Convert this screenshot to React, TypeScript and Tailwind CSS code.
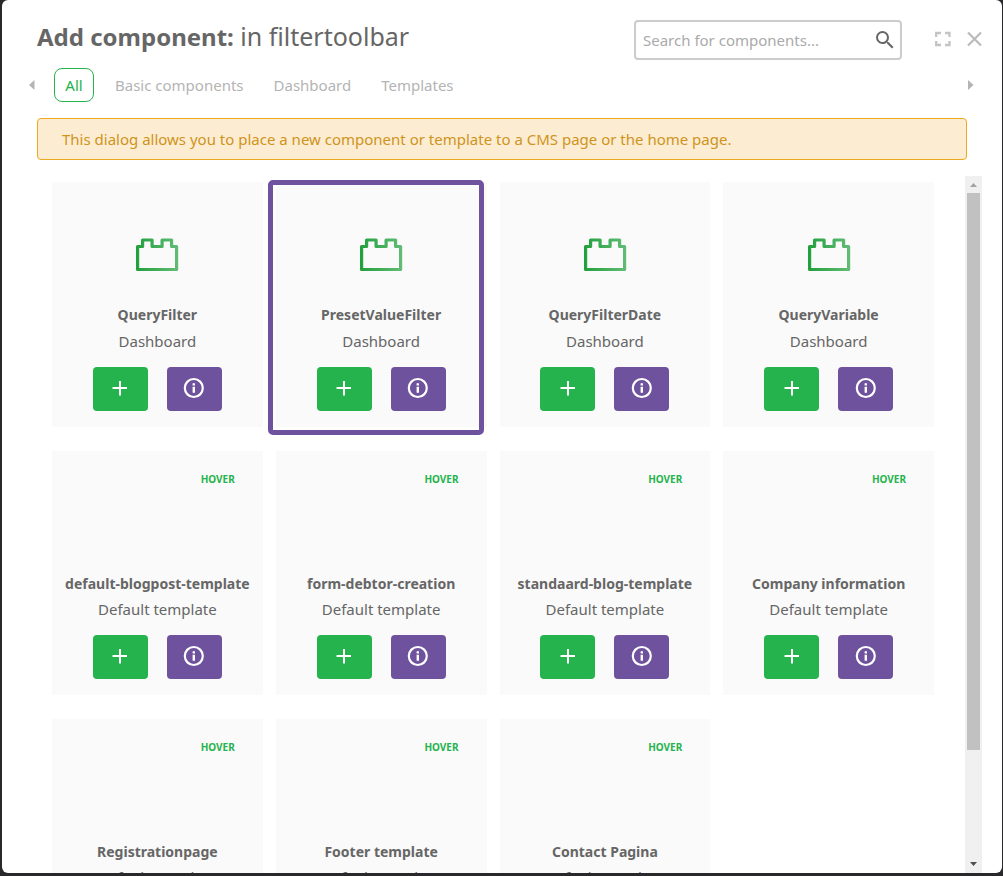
import React from "react";

type Item = { name: string; kind: string; template?: boolean; selected?: boolean };

const items: Item[] = [
  { name: "QueryFilter", kind: "Dashboard" },
  { name: "PresetValueFilter", kind: "Dashboard", selected: true },
  { name: "QueryFilterDate", kind: "Dashboard" },
  { name: "QueryVariable", kind: "Dashboard" },
  { name: "default-blogpost-template", kind: "Default template", template: true },
  { name: "form-debtor-creation", kind: "Default template", template: true },
  { name: "standaard-blog-template", kind: "Default template", template: true },
  { name: "Company information", kind: "Default template", template: true },
  { name: "Registrationpage", kind: "Default template", template: true },
  { name: "Footer template", kind: "Default template", template: true },
  { name: "Contact Pagina", kind: "Default template", template: true },
];

const tabs = ["All", "Basic components", "Dashboard", "Templates"];

function BrickIcon() {
  return (
    <svg width="44" height="34" viewBox="0 0 44 34" fill="none" aria-hidden="true">
      <defs>
        <linearGradient id="brick" x1="0" y1="0" x2="44" y2="0" gradientUnits="userSpaceOnUse">
          <stop offset="0" stopColor="#1f9f3a" />
          <stop offset="1" stopColor="#63bd77" />
        </linearGradient>
      </defs>
      <path
        d="M2.600 31.500V8.500H7.600V2H17.100V8.500H27.100V2H36.600V8.500H41.600V31.500Z"
        stroke="url(#brick)"
        strokeWidth="3.2"
        strokeLinejoin="round"
      />
    </svg>
  );
}

function PlusIcon() {
  return (
    <svg width="24" height="24" viewBox="0 0 24 24" fill="#fff" aria-hidden="true">
      <path d="M11 4h2v6h6v2h-6v6.500h-2V12H4.500v-2H11z" />
    </svg>
  );
}

function InfoIcon() {
  return (
    <svg width="24" height="24" viewBox="0 0 24 24" fill="none" aria-hidden="true">
      <circle cx="11.800" cy="11" r="9" stroke="#fff" strokeWidth="2.200" />
      <path d="M10.600 6.300h2.400v2.200h-2.400zM10.600 9.800h2.400v6h-2.400z" fill="#fff" />
    </svg>
  );
}

function Card({ item }: { item: Item }) {
  return (
    <li className={`relative flex flex-col items-center bg-[#fafafa] ${item.template ? "h-[244px]" : "h-[245px]"}`}>
      <div className="flex h-[121px] w-full shrink-0 items-end justify-center">
        {item.template ? (
          <span className="mb-[83px] ml-auto mr-7 text-[10px] font-bold leading-5 text-[#25b34d]">HOVER</span>
        ) : (
          <span className="mb-[31px]">
            <BrickIcon />
          </span>
        )}
      </div>
      <h2 className="whitespace-nowrap text-[14px] font-bold leading-6">{item.name}</h2>
      <p className={`text-[15px] leading-6 ${item.template ? "mt-px" : "mt-0.5"}`}>{item.kind}</p>
      <div className="mt-[14px] flex gap-[19px]">
        <button
          type="button"
          aria-label={`Add ${item.name}`}
          className="flex h-11 w-[55px] items-center justify-center rounded bg-[#25b34d]"
        >
          <PlusIcon />
        </button>
        <button
          type="button"
          aria-label={`About ${item.name}`}
          className="flex h-11 w-[55px] items-center justify-center rounded bg-[#6e529d]"
        >
          <InfoIcon />
        </button>
      </div>
      {item.selected && (
        <span className="pointer-events-none absolute -bottom-2 -left-2 -top-0.5 right-[3px] rounded-[5px] border-[5px] border-[#6e529d]" />
      )}
    </li>
  );
}

export default function App() {
  return (
    <div className="h-screen bg-[#29282a] pb-[3px] pl-0.5 pr-px font-['Noto_Sans',sans-serif] text-[#666]">
      <main className="flex h-full flex-col overflow-hidden rounded-md bg-white">
        <header className="flex h-[60px] shrink-0 items-end pl-[35px] pr-[15px]">
          <h1 className="mr-auto whitespace-nowrap text-[25px] leading-[46px]">
            <strong className="text-[24px] font-bold">Add component:</strong> in filtertoolbar
          </h1>
          <label className="flex h-10 w-[268px] items-center rounded border-2 border-[#ccc] pl-[7px] pr-[3px]">
            <input
              type="text"
              aria-label="Search for components"
              placeholder="Search for components..."
              className="min-w-0 flex-1 bg-transparent text-[15px] outline-none placeholder:text-[#aaa]"
            />
            <svg width="24" height="24" viewBox="0 0 24 24" fill="#666" aria-hidden="true">
              <path d="M15.500 14h-.79l-.28-.27A6.471 6.471 0 0 0 16 9.500 6.500 6.500 0 1 0 9.500 16c1.610 0 3.090-.59 4.230-1.570l.27.28v.79l5 4.990L20.490 19l-4.990-5zm-6 0C7.010 14 5 11.990 5 9.500S7.010 5 9.500 5 14 7.010 14 9.500 11.990 14 9.500 14z" />
            </svg>
          </label>
          <button type="button" aria-label="Full screen" className="mb-[9px] ml-[29px]">
            <svg width="24" height="24" viewBox="0 0 24 24" fill="none" stroke="#c4c4c4" strokeWidth="2.300" aria-hidden="true">
              <path d="M5.200 10V6H10M14 6h4.500v4M18.500 14v4H14M10 18H5.200v-4" />
            </svg>
          </button>
          <button type="button" aria-label="Close" className="mb-[9px] ml-2">
            <svg width="24" height="24" viewBox="0 0 24 24" fill="none" stroke="#bbb" strokeWidth="2.200" aria-hidden="true">
              <path d="M5 5.500l13 13M18 5.500l-13 13" />
            </svg>
          </button>
        </header>

        <nav className="mt-2 flex h-[34px] shrink-0 items-center pl-[27px] pr-7 text-[15px] text-[#b4b4b4]">
          <button type="button" aria-label="Previous tabs">
            <svg width="6" height="10" viewBox="0 0 6 10" fill="#b4b4b4" aria-hidden="true">
              <path d="M5.500 0v10L0 5z" />
            </svg>
          </button>
          <div className="ml-[19px] flex gap-3">
            {tabs.map((tab, i) => (
              <button
                key={tab}
                type="button"
                className={
                  i === 0
                    ? "h-[34px] w-10 rounded-lg border border-[#25b34d] text-[#25b34d]"
                    : "h-[34px] px-[9px]"
                }
              >
                {tab}
              </button>
            ))}
          </div>
          <button type="button" aria-label="Next tabs" className="ml-auto">
            <svg width="6" height="10" viewBox="0 0 6 10" fill="#b4b4b4" aria-hidden="true">
              <path d="M0 0v10l5.500-5z" />
            </svg>
          </button>
        </nav>

        <p className="ml-[35px] mr-[35px] mt-4 flex h-[42px] shrink-0 items-center rounded border border-[#eda81f] bg-[#fcedd2] px-6 text-[15px] text-[#d0931b]">
          This dialog allows you to place a new component or template to a CMS page or the home page.
        </p>

        <div className="mt-4 flex min-h-0 flex-1 pr-5">
          <ul className="grid min-w-0 flex-1 grid-cols-4 content-start gap-x-[13px] gap-y-6 overflow-y-auto pb-6 pl-[50px] pr-[31px] pt-1.5 [scrollbar-width:none]">
            {items.map((item) => (
              <Card key={item.name} item={item} />
            ))}
          </ul>
          <div className="flex w-[17px] shrink-0 flex-col items-center bg-[#f0f0f0]" aria-hidden="true">
            <svg width="17" height="17" viewBox="0 0 17 17" fill="#a3a3a3">
              <path d="M5 11h7L8.500 7z" />
            </svg>
            <div className="min-h-0 w-full flex-1 px-0.5">
              <div className="h-[84%] bg-[#c1c1c1]" />
            </div>
            <svg width="17" height="17" viewBox="0 0 17 17" fill="#505050">
              <path d="M5 6h7L8.500 10z" />
            </svg>
          </div>
        </div>
      </main>
    </div>
  );
}
